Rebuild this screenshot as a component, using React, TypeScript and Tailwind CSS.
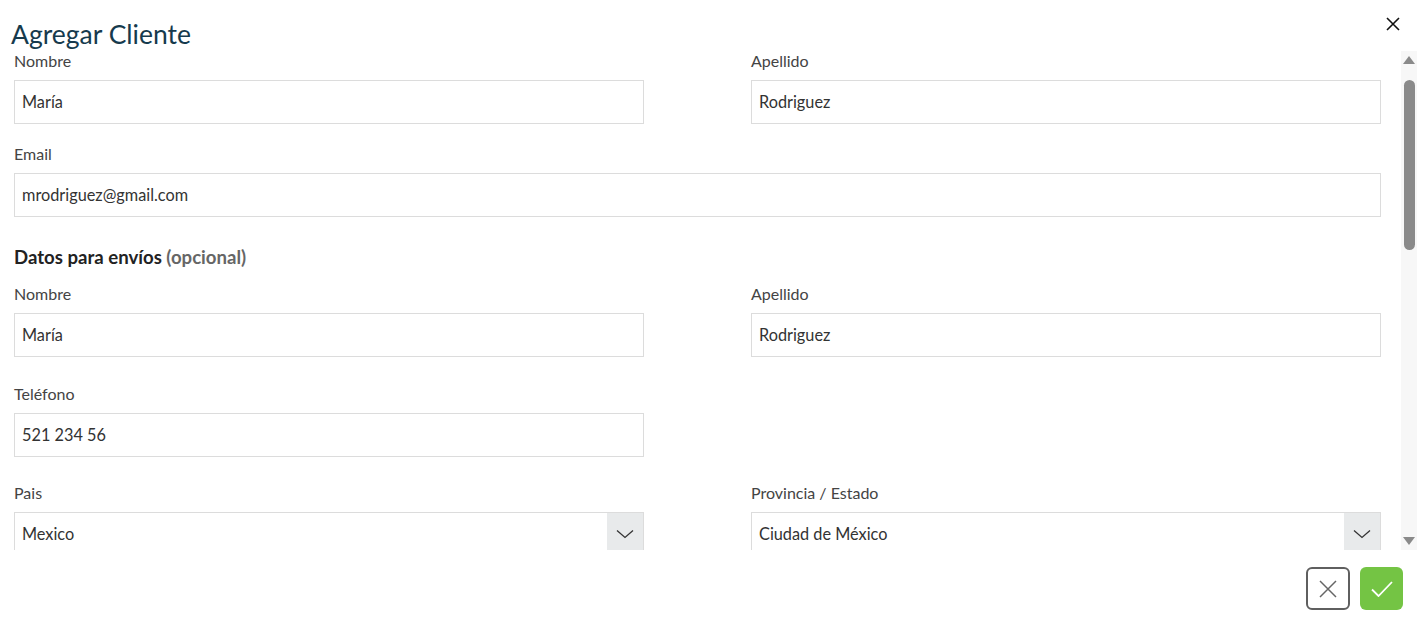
import React from "react";

const font = { fontFamily: "Lato, 'Open Sans', sans-serif" };

function Field({ label, value, className = "" }: { label: string; value: string; className?: string }) {
  return (
    <div className={className}>
      <div className="text-[16px] leading-5 text-[#444]">{label}</div>
      <div className="mt-[9px] h-[44px] border border-[#dcdcdc] flex items-center px-[7px] text-[16.3px] text-[#333]">
        {value}
      </div>
    </div>
  );
}

function SelectField({ label, value, className = "" }: { label: string; value: string; className?: string }) {
  return (
    <div className={className}>
      <div className="text-[16px] leading-5 text-[#444]">{label}</div>
      <div className="mt-[9px] h-[44px] border border-[#dcdcdc] flex items-stretch text-[16.3px] text-[#333]">
        <div className="flex-1 flex items-center px-[7px]">{value}</div>
        <div className="w-[36px] bg-[#e8eaeb] flex items-center justify-center">
          <svg width="18" height="10" viewBox="0 0 18 10" fill="none" stroke="#333" strokeWidth="1.3">
            <path d="M1 1.5l8 7 8-7" />
          </svg>
        </div>
      </div>
    </div>
  );
}

export default function App() {
  return (
    <div className="relative w-[1417px] h-[619px] bg-white overflow-hidden" style={font}>
      {/* Header */}
      <h1 className="pl-[11px] pt-[17px] text-[26.5px] leading-[34px] text-[#163a4d]">Agregar Cliente</h1>
      <button className="absolute top-[17px] right-[17px] w-[14px] h-[14px]">
        <svg width="14" height="14" viewBox="0 0 14 14" stroke="#111" strokeWidth="1.6">
          <path d="M1 1l12 12M13 1L1 13" />
        </svg>
      </button>

      {/* Body */}
      <div className="flex h-[499px]">
        <div className="flex-1 overflow-hidden pl-[14px] pr-[20px]">
          <div className="grid grid-cols-2 gap-x-[107px]">
            <Field label="Nombre" value="María" />
            <Field label="Apellido" value="Rodriguez" />
          </div>
          <Field label="Email" value="mrodriguez@gmail.com" className="mt-[20px]" />

          <h2 className="mt-[28px] text-[18.6px] leading-6 font-bold text-[#222]">
            Datos para envíos <span className="text-[#666]">(opcional)</span>
          </h2>
          <div className="grid grid-cols-2 gap-x-[107px] mt-[15px]">
            <Field label="Nombre" value="María" />
            <Field label="Apellido" value="Rodriguez" />
          </div>
          <div className="grid grid-cols-2 gap-x-[107px] mt-[27px]">
            <Field label="Teléfono" value="521 234 56" />
          </div>
          <div className="grid grid-cols-2 gap-x-[107px] mt-[26px]">
            <SelectField label="Pais" value="Mexico" />
            <SelectField label="Provincia / Estado" value="Ciudad de México" />
          </div>
        </div>

        {/* Scrollbar */}
        <div className="w-[16px] bg-[#f7f7f7] flex flex-col items-center pt-[5px] pb-[5px]">
          <svg width="12" height="8" viewBox="0 0 12 8" fill="#8a8a8a">
            <path d="M6 0l6 8H0z" />
          </svg>
          <div className="mt-[16px] w-[11px] h-[170px] rounded-full bg-[#8a8a8a]" />
          <div className="flex-1" />
          <svg width="12" height="8" viewBox="0 0 12 8" fill="#8a8a8a">
            <path d="M0 0h12L6 8z" />
          </svg>
        </div>
      </div>

      {/* Footer */}
      <div className="flex justify-end gap-[10px] pr-[14px] pt-[17px]">
        <button className="w-[44px] h-[43px] border-2 border-[#5f5f5f] rounded-[6px] flex items-center justify-center">
          <svg width="18" height="18" viewBox="0 0 18 18" stroke="#666" strokeWidth="1.5">
            <path d="M1 1l16 16M17 1L1 17" />
          </svg>
        </button>
        <button className="w-[43px] h-[43px] bg-[#74c444] rounded-[6px] flex items-center justify-center">
          <svg width="22" height="16" viewBox="0 0 22 16" fill="none" stroke="#fff" strokeWidth="1.8">
            <path d="M1 8.5l6.5 6.5L21 1" />
          </svg>
        </button>
      </div>
    </div>
  );
}
